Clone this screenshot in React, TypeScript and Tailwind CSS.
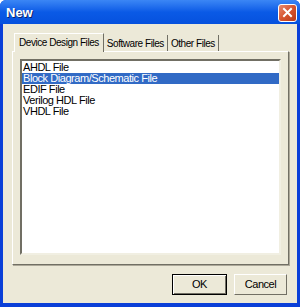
const files = [
  "AHDL File",
  "Block Diagram/Schematic File",
  "EDIF File",
  "Verilog HDL File",
  "VHDL File",
];

const tabs = ["Device Design Files", "Software Files", "Other Files"];

function CloseButton() {
  return (
    <div className="flex h-[18px] w-[19px] items-center justify-center rounded-[3px] border border-white bg-gradient-to-br from-[#E8896D] via-[#D6542E] to-[#B83A1A]">
      <svg width="11" height="11" viewBox="0 0 11 11">
        <path d="M2 2 L9 9 M9 2 L2 9" stroke="white" strokeWidth="2" strokeLinecap="square" />
      </svg>
    </div>
  );
}

export default function App() {
  const selected = 1;
  return (
    <div
      className="h-[307px] w-[300px] overflow-hidden bg-white text-[11px] tracking-[-0.45px] text-black"
      style={{ fontFamily: '"Liberation Sans", Arial, sans-serif' }}
    >
      <div className="flex h-full flex-col rounded-t-[6px] bg-[#0A3FD8]">
        <div className="flex h-[24px] items-center justify-between rounded-t-[6px] bg-gradient-to-b from-[#3B86F5] via-[#0A5AE6] to-[#0651DE] pl-[6px] pr-[3px] pt-[1px]">
          <span className="text-[13px] font-bold tracking-normal text-white [text-shadow:1px_1px_0_#0A246A]">New</span>
          <CloseButton />
        </div>
        <div className="mx-[3px] mb-[4px] flex flex-1 flex-col bg-[#ECE9D8] px-[9px] pt-[9px]">
          <div className="flex items-end pl-[2px] text-[10px]">
            {tabs.map((t, i) =>
              i === 0 ? (
                <div
                  key={t}
                  className="relative z-10 -mb-px flex h-[19px] items-center border-x border-t border-l-white border-r-[#716F64] border-t-white bg-[#ECE9D8] px-[4px] pb-[1px]"
                >
                  {t}
                </div>
              ) : (
                <div
                  key={t}
                  className="flex h-[16px] items-center border-r border-r-[#716F64] px-[3px]"
                >
                  {t}
                </div>
              ),
            )}
          </div>
          <div className="flex h-[214px] w-[277px] flex-col border border-b-[#716F64] border-l-white border-r-[#716F64] border-t-white px-[7px] pt-[7px] shadow-[1px_1px_0_#ACA899]">
            <div className="h-[196px] w-[261px] border-2 border-b-[#F1EFE2] border-l-[#716F64] border-r-[#F1EFE2] border-t-[#716F64] bg-white">
              <ul className="flex flex-col pt-px">
                {files.map((f, i) => (
                  <li
                    key={f}
                    className={
                      i === selected
                        ? "h-[11px] bg-[#316AC5] pl-[1px] leading-[11px] text-white"
                        : "h-[11px] pl-[1px] leading-[11px]"
                    }
                  >
                    {f}
                  </li>
                ))}
              </ul>
            </div>
          </div>
          <div className="mt-[9px] flex justify-end gap-[7px] pr-[1px]">
            <button className="h-[21px] w-[55px] border border-black bg-[#ECE9D8] shadow-[inset_1px_1px_0_#fff,inset_-1px_-1px_0_#716F64]">
              OK
            </button>
            <button className="h-[21px] w-[53px] border border-b-[#716F64] border-l-white border-r-[#716F64] border-t-white bg-[#ECE9D8]">
              Cancel
            </button>
          </div>
        </div>
      </div>
    </div>
  );
}
